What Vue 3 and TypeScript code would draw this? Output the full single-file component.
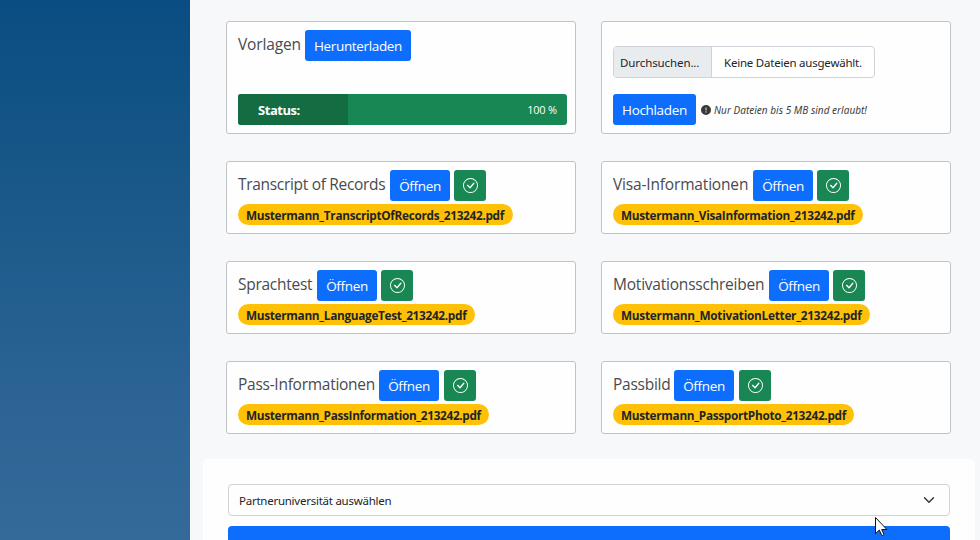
<script setup lang="ts">
interface DocumentCard {
  key: string
  title: string
  file: string
}

const documents: DocumentCard[] = [
  { key: 'transcript', title: 'Transcript of Records', file: 'Mustermann_TranscriptOfRecords_213242.pdf' },
  { key: 'visa', title: 'Visa-Informationen', file: 'Mustermann_VisaInformation_213242.pdf' },
  { key: 'language', title: 'Sprachtest', file: 'Mustermann_LanguageTest_213242.pdf' },
  { key: 'motivation', title: 'Motivationsschreiben', file: 'Mustermann_MotivationLetter_213242.pdf' },
  { key: 'passport', title: 'Pass-Informationen', file: 'Mustermann_PassInformation_213242.pdf' },
  { key: 'photo', title: 'Passbild', file: 'Mustermann_PassportPhoto_213242.pdf' },
]
</script>

<template>
  <div class="page">
    <aside class="sidebar"></aside>
    <main class="content">
      <div class="cards">
        <section class="card tall">
          <div class="row">
            <span class="title templates">Vorlagen</span>
            <button class="btn download"><span>Herunterladen</span></button>
          </div>
          <div class="progress">
            <div class="progress-label"><span>Status:</span></div>
            <div class="progress-value">100 %</div>
          </div>
        </section>

        <section class="card tall upload">
          <div class="file-input">
            <span class="browse"><span>Durchsuchen...</span></span>
            <span class="chosen"><span>Keine Dateien ausgewählt.</span></span>
          </div>
          <div class="row upload-row">
            <button class="btn send"><span>Hochladen</span></button>
            <svg class="info" viewBox="0 0 16 16" fill="currentColor">
              <path d="M16 8A8 8 0 1 1 0 8a8 8 0 0 1 16 0M8 4a.905.905 0 0 0-.9.995l.35 3.507a.552.552 0 0 0 1.1 0l.35-3.507A.905.905 0 0 0 8 4m.002 6a1 1 0 1 0 0 2 1 1 0 0 0 0-2" />
            </svg>
            <em class="hint">Nur Dateien bis 5 MB sind erlaubt!</em>
          </div>
        </section>

        <section v-for="doc in documents" :key="doc.key" class="card" :class="doc.key">
          <div class="row">
            <span class="title">{{ doc.title }}</span>
            <button class="btn open"><span>Öffnen</span></button>
            <span class="done">
              <svg viewBox="0 0 16 16" fill="currentColor">
                <path d="M8 15A7 7 0 1 1 8 1a7 7 0 0 1 0 14m0 1A8 8 0 1 0 8 0a8 8 0 0 0 0 16" />
                <path d="m10.97 4.97-.02.022-3.473 4.425-2.093-2.094a.75.75 0 0 0-1.06 1.06L6.97 11.03a.75.75 0 0 0 1.079-.02l3.992-4.99a.75.75 0 0 0-1.071-1.05" />
              </svg>
            </span>
          </div>
          <span class="badge">{{ doc.file }}</span>
        </section>
      </div>

      <section class="panel">
        <div class="select">
          <span>Partneruniversität auswählen</span>
          <svg viewBox="0 0 16 16" fill="none" stroke="#343a40" stroke-width="2" stroke-linecap="round" stroke-linejoin="round">
            <path d="m2 5 6 6 6-6" />
          </svg>
        </div>
        <div class="submit"></div>
      </section>
    </main>

    <svg class="cursor" viewBox="0 0 13 20">
      <path d="M.5.5v16.2l3.8-3.6 2.4 5.1q1.2 1 2.3-.7l-2.3-5h5.2z" fill="#fff" stroke="#111" stroke-width="1" />
    </svg>
  </div>
</template>

<style>
body {
  overflow: hidden;
}
</style>

<style scoped>
.page {
  position: relative;
  display: flex;
  width: 980px;
  height: 540px;
  overflow: hidden;
  background: #f7f8fa;
  color: #212529;
  font-family: 'Open Sans', 'Noto Sans', sans-serif;
}

.page * {
  box-sizing: border-box;
}

.sidebar {
  flex: 0 0 190px;
  background: linear-gradient(#0a4d82, #195888 35%, #2c6495 75%, #336a99);
}

.content {
  flex: 1;
  min-width: 0;
  padding: 21px 5px 0 13px;
}

.cards {
  display: grid;
  grid-template-columns: 350px 350px;
  grid-template-rows: 113px 73px 73px 73px;
  gap: 27px 25px;
  padding-left: 23px;
}

.card {
  padding: 8px 8px 0 11px;
  border: 1px solid #c2c3c6;
  border-radius: 3px;
  background: #fefefe;
}

.row {
  display: flex;
  align-items: center;
  height: 31px;
}

.title {
  flex: none;
  margin-right: 4px;
  padding-bottom: 3.4px;
  color: #494b4e;
  font-size: 15.5px;
  line-height: 24px;
  letter-spacing: -0.27px;
  white-space: nowrap;
}

.title.templates { width: 63px; letter-spacing: -0.15px; }
.transcript .title { width: 148px; letter-spacing: -0.31px; }
.visa .title { width: 136px; letter-spacing: -0.17px; }
.language .title { width: 75px; }
.motivation .title { width: 152px; letter-spacing: -0.22px; }
.passport .title { width: 137px; }
.photo .title { width: 57px; letter-spacing: -0.25px; }

.btn {
  display: flex;
  flex: none;
  align-items: center;
  justify-content: center;
  height: 31px;
  padding: 1px 0 0;
  border: 0;
  border-radius: 3px;
  background: #0d6efd;
  color: #fff;
  font-family: inherit;
  font-size: 13.5px;
  letter-spacing: -0.34px;
  white-space: nowrap;
}

.download { width: 106px; }
.open { width: 60px; }
.send { width: 83px; padding: 0; }

.done {
  display: flex;
  align-items: center;
  justify-content: center;
  width: 32px;
  height: 31px;
  margin-left: 4px;
  border-radius: 3px;
  background: #198754;
  color: #fff;
}

.passport .done,
.photo .done {
  margin-left: 5px;
}

.done svg {
  width: 15px;
  height: 15px;
}

.badge {
  display: flex;
  align-items: center;
  height: 21px;
  margin-top: 3px;
  padding: 1px 0 0 8px;
  border-radius: 11px;
  background: #ffc107;
  color: #212529;
  font-size: 11.8px;
  font-weight: 700;
  letter-spacing: -0.31px;
  white-space: nowrap;
}

.transcript .badge { width: 275px; }
.visa .badge { width: 250px; }
.language .badge { width: 237px; }
.motivation .badge { width: 257px; letter-spacing: -0.26px; }
.passport .badge { width: 251px; letter-spacing: -0.33px; }
.photo .badge { width: 241px; }

.progress {
  display: flex;
  height: 31px;
  margin-top: 33px;
  border-radius: 3px;
  background: #198754;
  color: #fff;
}

.progress-label {
  display: flex;
  align-items: center;
  width: 110px;
  padding: 1px 0 0 20px;
  border-radius: 3px 0 0 3px;
  background: #146c43;
  font-size: 13px;
  font-weight: 700;
  letter-spacing: -0.45px;
}

.progress-value {
  flex: 1;
  padding-right: 10px;
  font-size: 11px;
  letter-spacing: -0.2px;
  line-height: 32px;
  text-align: right;
}

.upload {
  padding-top: 24px;
}

.file-input {
  display: flex;
  width: 262px;
  height: 32px;
  border: 1px solid #ced4da;
  border-radius: 4px;
  background: #fff;
  font-family: 'Noto Sans', sans-serif;
  font-size: 11.5px;
  line-height: 32px;
  white-space: nowrap;
}

.browse {
  width: 98px;
  padding-left: 6px;
  border-right: 1px solid #ced4da;
  border-radius: 3px 0 0 3px;
  background: #e9ecef;
  letter-spacing: -0.1px;
}

.chosen {
  padding-left: 12px;
  letter-spacing: -0.22px;
}

.upload-row {
  margin-top: 16px;
}

.info {
  flex: none;
  width: 10px;
  height: 10px;
  margin: 0 3.5px 0 4.5px;
  color: #3c3739;
}

.hint {
  color: #3c3e40;
  font-family: 'Noto Sans', sans-serif;
  font-size: 10px;
  letter-spacing: 0.02px;
  white-space: nowrap;
}

.panel {
  height: 110px;
  margin-top: 25px;
  padding: 25px;
  border-radius: 5px;
  background: #fefefe;
}

.select {
  display: flex;
  align-items: center;
  justify-content: space-between;
  height: 32px;
  padding: 1px 14px 0 10px;
  border: 1px solid #ced4da;
  border-radius: 4px;
  background: #fefefe;
  font-family: 'Noto Sans', sans-serif;
  font-size: 11.5px;
  letter-spacing: -0.25px;
}

.select svg {
  width: 12px;
  height: 12px;
  margin-bottom: 1px;
}

.submit {
  height: 38px;
  margin-top: 10px;
  border-radius: 4px;
  background: #0d6efd;
}

.cursor {
  position: absolute;
  top: 517px;
  left: 875px;
  width: 13px;
  height: 20px;
}
</style>
